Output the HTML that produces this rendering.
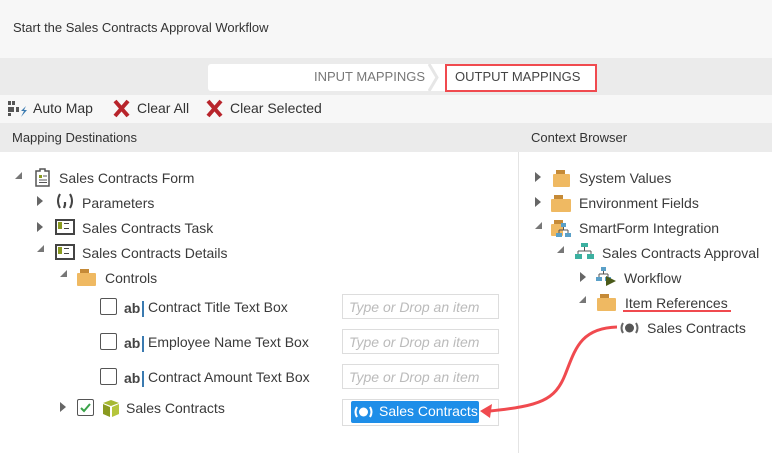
<!DOCTYPE html><html><head><style>
body{margin:0;width:772px;height:453px;overflow:hidden;background:#fff;font-family:"Liberation Sans",sans-serif;color:#333;position:relative}
.a{position:absolute;white-space:nowrap}
.t{font-size:14px;color:#3a3a3a}
.tri{position:absolute;width:0;height:0}
.r{border-left:6px solid #666;border-top:5px solid transparent;border-bottom:5px solid transparent}
.d{border-right:7px solid #777;border-top:7px solid transparent}
.fold{position:absolute;width:18px;height:13px;background:#efb962;border-radius:1px}
.fold:before{content:"";position:absolute;left:3px;top:-4px;width:9px;height:4px;background:#c58a37}
.cb{position:absolute;width:15px;height:15px;border:1.5px solid #555;border-radius:2px;background:#fff}
.inp{position:absolute;left:342px;width:157px;height:25px;border:1px solid #ddd;font-style:italic;color:#bbb;font-size:14px;line-height:24px;padding-left:6px;box-sizing:border-box}
.ab{position:absolute;font-weight:bold;font-size:14px;color:#444}
.ab:after{content:"";position:absolute;right:-4px;top:1px;width:2px;height:16px;background:#3a7ab0}
.frm{position:absolute;width:16px;height:13px;border:2px solid #444;box-sizing:border-box;background:#fff}
.frm:before{content:"";position:absolute;left:1px;top:1px;width:4px;height:7px;background:#8a9a20}
.frm:after{content:"";position:absolute;left:7px;top:2px;width:5px;height:4px;border-top:1.5px solid #444;border-bottom:1.5px solid #444}
</style></head><body>
<div class="a" style="left:0;top:0;width:772px;height:58px;background:#f7f7f7"></div>
<div class="a" style="left:13px;top:20px;font-size:13px;color:#333">Start the Sales Contracts Approval Workflow</div>
<div class="a" style="left:0;top:58px;width:772px;height:37px;background:#ebebeb"></div>
<div class="a" style="left:208px;top:64px;width:388px;height:27px;background:#fff;border-radius:3px 0 0 3px"></div>
<div class="a" style="left:314px;top:69px;font-size:13px;color:#777">INPUT MAPPINGS</div>
<svg class="a" style="left:428px;top:64px" width="16" height="27"><path d="M1 0 L9 13.5 L1 27" fill="none" stroke="#e6e6e6" stroke-width="3"/></svg>
<div class="a" style="left:445px;top:64px;width:148px;height:24px;border:2px solid #f04a4f"></div>
<div class="a" style="left:455px;top:69px;font-size:13px;color:#444">OUTPUT MAPPINGS</div>
<div class="a" style="left:0;top:95px;width:772px;height:28px;background:#f7f7f7"></div>
<svg class="a" style="left:8px;top:100px" width="20" height="18"><rect x="0" y="1" width="3" height="4" fill="#555"/><rect x="4" y="1" width="3" height="4" fill="#555"/><rect x="0" y="7" width="6" height="5" fill="#555"/><rect x="0" y="13" width="3" height="3" fill="#555"/><rect x="8" y="7" width="3" height="5" fill="#555"/><path d="M18 6 L13 11 L16 11 L13 17 L19 10 L16 10 Z" fill="#3a7ab0"/></svg>
<div class="a" style="left:33px;top:100px;font-size:14px">Auto Map</div>
<svg class="a" style="left:112px;top:99px" width="19" height="19"><path d="M3 2L16 17M16 2L3 17" stroke="#b8242b" stroke-width="4"/></svg>
<div class="a" style="left:137px;top:100px;font-size:14px">Clear All</div>
<svg class="a" style="left:205px;top:99px" width="19" height="19"><path d="M3 2L16 17M16 2L3 17" stroke="#b8242b" stroke-width="4"/></svg>
<div class="a" style="left:230px;top:100px;font-size:14px">Clear Selected</div>
<div class="a" style="left:0;top:123px;width:772px;height:29px;background:#ebebeb"></div>
<div class="a" style="left:12px;top:130px;font-size:13px;color:#333">Mapping Destinations</div>
<div class="a" style="left:531px;top:130px;font-size:13px;color:#333">Context Browser</div>
<div class="a" style="left:518px;top:152px;width:1px;height:301px;background:#e4e4e4"></div>

<div class="tri d" style="left:15px;top:172px"></div>
<svg class="a" style="left:35px;top:168px" width="15" height="19"><path d="M1 3h4v-2h5v2h4v15h-13z" fill="#fff" stroke="#555" stroke-width="1.5"/><rect x="4" y="7" width="3" height="3" fill="#8a9a20"/><path d="M8 8h4M4 12h8M4 14.5h8" stroke="#555"/></svg>
<div class="a t" style="left:59px;top:170px">Sales Contracts Form</div>
<div class="tri r" style="left:37px;top:196px"></div>
<svg class="a" style="left:55px;top:193px" width="20" height="18"><path d="M5 1 Q1 8 5 15M15 1 Q19 8 15 15" fill="none" stroke="#444" stroke-width="2"/><path d="M10 9 v3 l-1 3" fill="none" stroke="#444" stroke-width="2.2"/></svg>
<div class="a t" style="left:82px;top:195px">Parameters</div>
<div class="tri r" style="left:37px;top:222px"></div>
<div class="frm" style="left:55px;top:219px;width:20px;height:16px"></div>
<div class="a t" style="left:82px;top:220px">Sales Contracts Task</div>
<div class="tri d" style="left:37px;top:245px"></div>
<div class="frm" style="left:55px;top:244px;width:20px;height:16px"></div>
<div class="a t" style="left:82px;top:245px">Sales Contracts Details</div>
<div class="tri d" style="left:60px;top:270px"></div>
<div class="fold" style="left:77px;top:273px;width:19px;height:13px"></div>
<div class="a t" style="left:105px;top:270px">Controls</div>

<div class="cb" style="left:100px;top:298px"></div><div class="ab" style="left:124px;top:300px">ab</div>
<div class="a t" style="left:148px;top:299px">Contract Title Text Box</div>
<div class="inp" style="top:294px">Type or Drop an item</div>
<div class="cb" style="left:100px;top:333px"></div><div class="ab" style="left:124px;top:335px">ab</div>
<div class="a t" style="left:148px;top:334px">Employee Name Text Box</div>
<div class="inp" style="top:329px">Type or Drop an item</div>
<div class="cb" style="left:100px;top:368px"></div><div class="ab" style="left:124px;top:370px">ab</div>
<div class="a t" style="left:148px;top:369px">Contract Amount Text Box</div>
<div class="inp" style="top:364px">Type or Drop an item</div>

<div class="tri r" style="left:60px;top:402px"></div>
<div class="cb" style="left:77px;top:399px"></div>
<svg class="a" style="left:79px;top:401px" width="14" height="14"><path d="M2 7l3 3l6-7" fill="none" stroke="#3aa34a" stroke-width="2"/></svg>
<svg class="a" style="left:102px;top:399px" width="18" height="19"><path d="M1 4l8-3l8 3l-8 3z" fill="#a6b832"/><path d="M1 5l7 3v10l-7-3z" fill="#8a9a20"/><path d="M17 5l-7 3v10l7-3z" fill="#b5c53c"/></svg>
<div class="a t" style="left:126px;top:400px">Sales Contracts</div>
<div class="a" style="left:342px;top:399px;width:157px;height:27px;border:1px solid #ddd;box-sizing:border-box"></div>
<div class="a" style="left:351px;top:401px;width:128px;height:22px;background:#1e8ee8;border-radius:2px"></div>
<svg class="a" style="left:354px;top:405px" width="19" height="14"><path d="M3 2 Q0 7 3 12M16 2 Q19 7 16 12" fill="none" stroke="#fff" stroke-width="2"/><ellipse cx="9.5" cy="7" rx="4.5" ry="4.5" fill="#fff"/></svg>
<div class="a" style="left:379px;top:403px;font-size:14px;color:#fff">Sales Contracts</div>

<div class="tri r" style="left:535px;top:172px"></div>
<div class="fold" style="left:553px;top:174px;width:17px;height:13px"></div>
<div class="a t" style="left:579px;top:170px">System Values</div>
<div class="tri r" style="left:535px;top:197px"></div>
<div class="fold" style="left:551px;top:199px;width:20px;height:13px"></div>
<div class="a t" style="left:579px;top:195px">Environment Fields</div>
<div class="tri d" style="left:535px;top:222px"></div>
<div class="fold" style="left:551px;top:224px;width:12px;height:12px"></div>
<svg class="a" style="left:556px;top:222px" width="16" height="16"><rect x="5" y="1" width="5" height="4" fill="#5aa0c8"/><path d="M7.5 5v3M3 8h9M3 8v3M12 8v3" stroke="#555"/><rect x="0" y="11" width="6" height="4" fill="#5aa0c8"/><rect x="9" y="11" width="6" height="4" fill="#5aa0c8"/></svg>
<div class="a t" style="left:579px;top:220px">SmartForm Integration</div>
<div class="tri d" style="left:557px;top:246px"></div>
<svg class="a" style="left:575px;top:242px" width="19" height="18"><rect x="6" y="1" width="7" height="4" fill="#3cb0a0"/><path d="M9.5 5v4M3 9h13M3 9v3M16 9v3" stroke="#555"/><rect x="0" y="12" width="7" height="5" fill="#3cb0a0"/><rect x="12" y="12" width="7" height="5" fill="#3cb0a0"/></svg>
<div class="a t" style="left:602px;top:245px">Sales Contracts Approval</div>
<div class="tri r" style="left:580px;top:272px"></div>
<svg class="a" style="left:596px;top:266px" width="22" height="20"><rect x="5" y="1" width="5" height="4" fill="#5aa0c8"/><path d="M7.5 5v3M3 8h9M3 8v3M12 8v3" stroke="#555"/><rect x="0" y="11" width="6" height="4" fill="#5aa0c8"/><rect x="9" y="11" width="6" height="4" fill="#5aa0c8"/><path d="M10 10l10 5l-10 5z" fill="#4a5a1a"/></svg>
<div class="a t" style="left:624px;top:270px">Workflow</div>
<div class="tri d" style="left:579px;top:296px"></div>
<div class="fold" style="left:597px;top:298px;width:19px;height:13px"></div>
<div class="a t" style="left:625px;top:295px">Item References</div>
<div class="a" style="left:623px;top:310px;width:108px;height:2px;background:#f04a4f"></div>
<svg class="a" style="left:620px;top:321px" width="19" height="14"><path d="M3 2 Q0 7 3 12M16 2 Q19 7 16 12" fill="none" stroke="#666" stroke-width="2"/><ellipse cx="9.5" cy="7" rx="4.5" ry="4.5" fill="#555"/></svg>
<div class="a t" style="left:647px;top:320px">Sales Contracts</div>
<svg class="a" style="left:470px;top:320px" width="160" height="100"><path d="M147 7 C110 8 105 30 95 55 C85 80 70 86 20 91" fill="none" stroke="#f04a4f" stroke-width="3"/><path d="M10 91 L22 84 L20 98 Z" fill="#f04a4f"/></svg>
</body></html>
